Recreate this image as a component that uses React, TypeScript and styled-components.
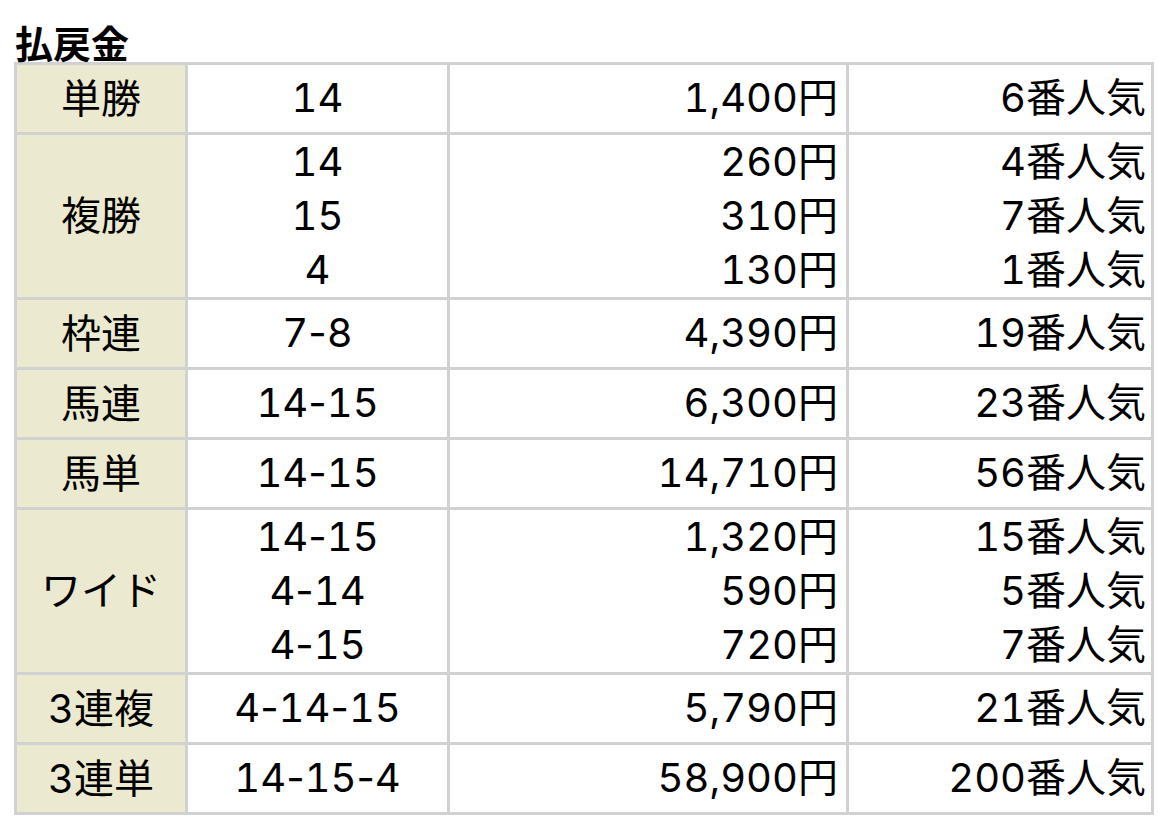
import React from "react";
import styled, { createGlobalStyle } from "styled-components";

const GlobalStyle = createGlobalStyle`
  html, body {
    margin: 0;
    padding: 0;
    background: #ffffff;
  }
  body {
    font-family: Inter, "Noto Sans CJK JP", "Noto Sans", sans-serif;
    color: #000000;
  }
`;

const Page = styled.div`
  padding: 22px 0 0 14px;
`;

const Title = styled.h2`
  margin: 0;
  font-family: "Noto Sans CJK JP", sans-serif;
  font-size: 38px;
  line-height: 40px;
  font-weight: 700;
  padding-left: 1px;
`;

const Grid = styled.div`
  display: grid;
  grid-template-columns: 168px 259px 396px 302px;
  gap: 3px;
  padding: 3px;
  width: max-content;
  background: #d1d1d1;
`;

const HeadCell = styled.div`
  background: #ebe9cf;
  display: flex;
  align-items: center;
  justify-content: center;
  font-size: 40px;
  line-height: 54px;
  font-feature-settings: "tnum" 1;
`;

const Cell = styled.div<{ $align: "center" | "right"; $pad: number; $multi: boolean }>`
  background: #ffffff;
  font-size: 40px;
  line-height: 54px;
  font-feature-settings: "tnum" 1;
  text-align: ${(p) => p.$align};
  padding: ${(p) => (p.$multi ? "0" : "6px 0 7px")};
  padding-right: ${(p) => (p.$align === "right" ? `${p.$pad}px` : "0")};
  display: flex;
  flex-direction: column;
  justify-content: center;
`;

const Line = styled.div`
  white-space: nowrap;
`;

const Sep = styled.span`
  font-feature-settings: normal;
`;

type Row = {
  name: string;
  items: { combo: string; pay: string; pop: string }[];
};

const rows: Row[] = [
  { name: "単勝", items: [{ combo: "14", pay: "1,400円", pop: "6番人気" }] },
  {
    name: "複勝",
    items: [
      { combo: "14", pay: "260円", pop: "4番人気" },
      { combo: "15", pay: "310円", pop: "7番人気" },
      { combo: "4", pay: "130円", pop: "1番人気" },
    ],
  },
  { name: "枠連", items: [{ combo: "7-8", pay: "4,390円", pop: "19番人気" }] },
  { name: "馬連", items: [{ combo: "14-15", pay: "6,300円", pop: "23番人気" }] },
  { name: "馬単", items: [{ combo: "14-15", pay: "14,710円", pop: "56番人気" }] },
  {
    name: "ワイド",
    items: [
      { combo: "14-15", pay: "1,320円", pop: "15番人気" },
      { combo: "4-14", pay: "590円", pop: "5番人気" },
      { combo: "4-15", pay: "720円", pop: "7番人気" },
    ],
  },
  { name: "3連複", items: [{ combo: "4-14-15", pay: "5,790円", pop: "21番人気" }] },
  { name: "3連単", items: [{ combo: "14-15-4", pay: "58,900円", pop: "200番人気" }] },
];

function Combo({ value }: { value: string }) {
  const parts = value.split("-");
  return (
    <Line>
      {parts.map((p, i) => (
        <React.Fragment key={i}>
          {i > 0 && <Sep>-</Sep>}
          {p}
        </React.Fragment>
      ))}
    </Line>
  );
}

export default function App() {
  return (
    <>
      <GlobalStyle />
      <Page>
        <Title>払戻金</Title>
        <Grid>
          {rows.map((r) => {
            const multi = r.items.length > 1;
            return (
              <React.Fragment key={r.name}>
                <HeadCell>{r.name}</HeadCell>
                <Cell $align="center" $pad={0} $multi={multi}>
                  {r.items.map((it, i) => (
                    <Combo key={i} value={it.combo} />
                  ))}
                </Cell>
                <Cell $align="right" $pad={8} $multi={multi}>
                  {r.items.map((it, i) => (
                    <Line key={i}>{it.pay}</Line>
                  ))}
                </Cell>
                <Cell $align="right" $pad={5} $multi={multi}>
                  {r.items.map((it, i) => (
                    <Line key={i}>{it.pop}</Line>
                  ))}
                </Cell>
              </React.Fragment>
            );
          })}
        </Grid>
      </Page>
    </>
  );
}
